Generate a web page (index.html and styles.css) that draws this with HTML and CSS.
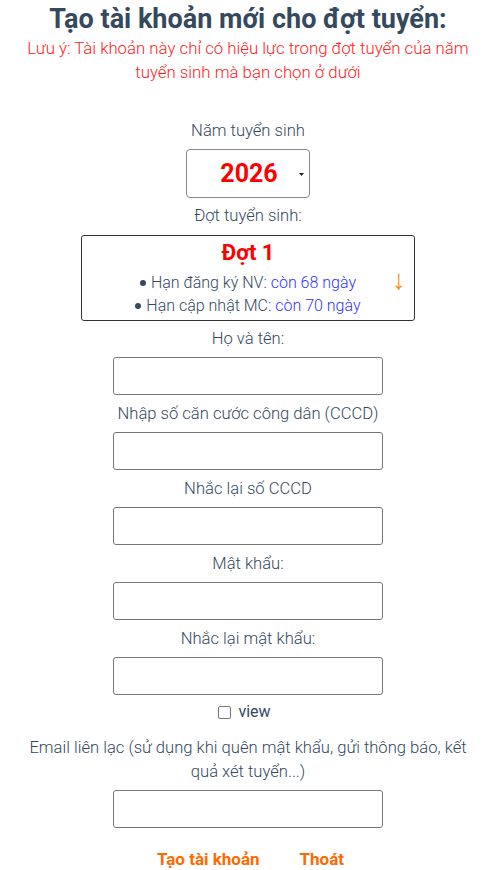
FILE: index.html
```html
<!DOCTYPE html>
<html lang="vi">
<head>
<meta charset="utf-8">
<title>Tạo tài khoản</title>
<link rel="stylesheet" href="styles.css">
</head>
<body>
<div class="page">
  <h1 class="title">Tạo tài khoản mới cho đợt tuyển:</h1>
  <p class="note">Lưu ý: Tài khoản này chỉ có hiệu lực trong đợt tuyển của năm tuyển sinh mà bạn chọn ở dưới</p>

  <div class="label label-year">Năm tuyển sinh</div>
  <div class="select">
    <span class="select-value">2026</span>
    <svg class="select-arrow" width="5" height="3" viewBox="0 0 5 3"><path d="M0 0H5L2.5 3Z" fill="#222"/></svg>
  </div>

  <div class="label">Đợt tuyển sinh:</div>
  <div class="round-box">
    <div class="round-title">Đợt 1</div>
    <div class="round-line"><span class="dot"></span> Hạn đăng ký NV: <span class="days">còn 68 ngày</span></div>
    <div class="round-line"><span class="dot"></span> Hạn cập nhật MC: <span class="days">còn 70 ngày</span></div>
    <span class="round-arrow">↓</span>
  </div>

  <div class="field">
    <div class="label">Họ và tên:</div>
    <div class="input"></div>
  </div>
  <div class="field">
    <div class="label">Nhập số căn cước công dân (CCCD)</div>
    <div class="input"></div>
  </div>
  <div class="field">
    <div class="label">Nhắc lại số CCCD</div>
    <div class="input"></div>
  </div>
  <div class="field">
    <div class="label">Mật khẩu:</div>
    <div class="input"></div>
  </div>
  <div class="field">
    <div class="label">Nhắc lại mật khẩu:</div>
    <div class="input"></div>
  </div>
  <label class="view"><span class="checkbox"></span>view</label>

  <div class="field email">
    <div class="label">Email liên lạc (sử dụng khi quên mật khẩu, gửi thông báo, kết quả xét tuyển...)</div>
    <div class="input"></div>
  </div>

  <div class="actions">
    <span class="btn">Tạo tài khoản</span>
    <span class="btn">Thoát</span>
  </div>
</div>
</body>
</html>
```

FILE: styles.css
```css
* { box-sizing: border-box; }
html, body { margin: 0; padding: 0; background: #fff; }
body {
  font-family: Roboto, "Noto Sans", "Liberation Sans", sans-serif;
  color: #34495e;
}
.page {
  width: 498px;
  padding: 0 9px 0 7px;
  display: flex;
  flex-direction: column;
  align-items: center;
  text-align: center;
}
.title {
  margin: 2px 0 0;
  font-size: 27px;
  line-height: 34px;
  font-weight: 700;
  color: #34495e;
}
.note {
  margin: 0;
  width: 462px;
  font-size: 16.8px;
  line-height: 24px;
  color: #ff2222;
  font-weight: 300;
}
.label {
  font-size: 16.6px;
  line-height: 24px;
  font-weight: 300;
  color: #34495e;
}
.label-year { margin-top: 35px; }
.select {
  margin-top: 6px;
  width: 124px;
  height: 49px;
  border: 1px solid #8a8a8a;
  border-radius: 4px;
  display: flex;
  align-items: center;
  justify-content: center;
  position: relative;
}
.select-value {
  font-size: 25px;
  font-weight: 700;
  color: #ff0000;
  margin-left: 2px;
}
.select-arrow {
  position: absolute;
  right: 5px;
  top: 23px;
}
.select + .label { margin-top: 6px; }
.round-box {
  margin-top: 7px;
  width: 334px;
  height: 86px;
  border: 1px solid #333;
  border-radius: 3px;
  position: relative;
  padding-top: 3px;
}
.round-title {
  font-size: 22px;
  line-height: 28px;
  font-weight: 700;
  color: #ff0000;
  margin-bottom: 4px;
}
.round-line {
  font-size: 16px;
  line-height: 23px;
  font-weight: 300;
  color: #34495e;
}
.dot {
  display: inline-block;
  width: 6px;
  height: 6px;
  border-radius: 50%;
  background: #34495e;
  vertical-align: middle;
  margin-right: 1px;
  position: relative;
  top: -1px;
}
.days { color: #3333ff; }
.round-arrow {
  position: absolute;
  right: 8px;
  top: 30px;
  font-size: 28px;
  line-height: 28px;
  color: #ff8c1a;
  font-weight: 300;
}
.field {
  display: flex;
  flex-direction: column;
  align-items: center;
  margin-top: 6px;
}
.field .label { margin-bottom: 6px; }
.input {
  width: 270px;
  height: 38px;
  border: 1px solid #767676;
  border-radius: 3px;
}
.field + .field { margin-top: 7px; }
.view {
  margin-top: 5px;
  padding-right: 7px;
  display: flex;
  align-items: center;
  font-size: 16px;
  line-height: 24px;
  color: #34495e;
}
.checkbox {
  width: 13px;
  height: 13px;
  border: 1px solid #767676;
  border-radius: 2px;
  margin-right: 7px;
}
.email { margin-top: 12px; width: 452px; }
.actions {
  margin-top: 20px;
  padding-left: 5px;
  display: flex;
  gap: 40px;
  font-size: 17px;
  line-height: 22px;
  font-weight: 700;
  color: #ff6a00;
}
.btn { color: #ff6a00; }
```
